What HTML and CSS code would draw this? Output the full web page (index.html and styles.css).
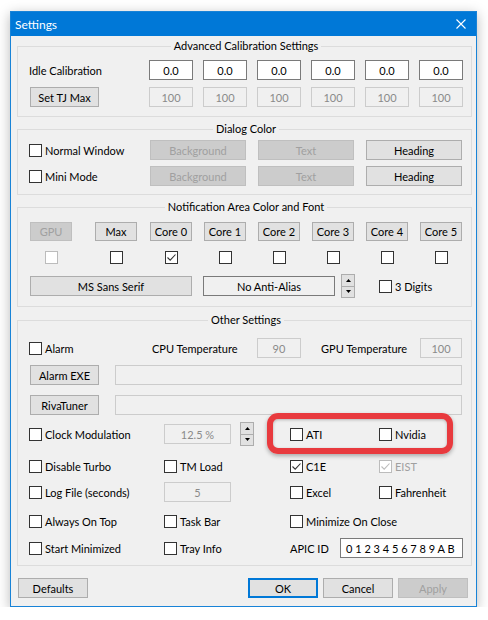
FILE: index.html
```html
<!DOCTYPE html>
<html>
<head>
<meta charset="utf-8">
<title>Settings</title>
<link rel="stylesheet" href="styles.css">
</head>
<body>
<div class="window">
  <div class="titlebar">
    <span class="title">Settings</span>
    <svg class="close" width="10" height="10" viewBox="0 0 10 10"><path d="M0.5 0.5 L9.5 9.5 M9.5 0.5 L0.5 9.5" stroke="#fff" stroke-width="1.1" fill="none"/></svg>
  </div>
  <div class="client">
    <fieldset class="group g1">
      <legend>Advanced Calibration Settings</legend>
      <div class="calib">
        <div class="lbl">Idle Calibration</div>
        <div class="edit">0.0</div>
        <div class="edit">0.0</div>
        <div class="edit">0.0</div>
        <div class="edit">0.0</div>
        <div class="edit">0.0</div>
        <div class="edit">0.0</div>
        <div class="btn tj">Set TJ Max</div>
        <div class="edit dis">100</div>
        <div class="edit dis">100</div>
        <div class="edit dis">100</div>
        <div class="edit dis">100</div>
        <div class="edit dis">100</div>
        <div class="edit dis">100</div>
      </div>
    </fieldset>

    <fieldset class="group g2">
      <legend>Dialog Color</legend>
      <div class="dialog">
        <label class="chk"><span class="box"></span>Normal Window</label>
        <div class="btn dis">Background</div>
        <div class="btn dis">Text</div>
        <div class="btn">Heading</div>
        <label class="chk"><span class="box"></span>Mini Mode</label>
        <div class="btn dis">Background</div>
        <div class="btn dis">Text</div>
        <div class="btn">Heading</div>
      </div>
    </fieldset>

    <fieldset class="group g3">
      <legend>Notification Area Color and Font</legend>
      <div class="notif">
        <div class="btn sm dis first">GPU</div>
        <div class="btn sm">Max</div>
        <div class="btn sm">Core 0</div>
        <div class="btn sm">Core 1</div>
        <div class="btn sm">Core 2</div>
        <div class="btn sm">Core 3</div>
        <div class="btn sm">Core 4</div>
        <div class="btn sm">Core 5</div>
        <div class="cell first"><span class="box disbox"></span></div>
        <div class="cell"><span class="box"></span></div>
        <div class="cell"><span class="box"><svg viewBox="0 0 11 11" width="11" height="11"><path d="M1.5 5.5 L4.2 8.2 L9.5 2.5" stroke="#333" stroke-width="1.1" fill="none"/></svg></span></div>
        <div class="cell"><span class="box"></span></div>
        <div class="cell"><span class="box"></span></div>
        <div class="cell"><span class="box"></span></div>
        <div class="cell"><span class="box"></span></div>
        <div class="cell"><span class="box"></span></div>
      </div>
      <div class="fontrow">
        <div class="btn font">MS Sans Serif</div>
        <div class="static">No Anti-Alias</div>
        <div class="spin">
          <div class="half"><svg width="5" height="3" viewBox="0 0 5 3"><path d="M0 3 L2.5 0 L5 3 Z" fill="#000"/></svg></div>
          <div class="half"><svg width="5" height="3" viewBox="0 0 5 3"><path d="M0 0 L2.5 3 L5 0 Z" fill="#000"/></svg></div>
        </div>
        <label class="chk digits"><span class="box"></span>3 Digits</label>
      </div>
    </fieldset>

    <fieldset class="group g4">
      <legend>Other Settings</legend>
      <div class="row ra">
        <label class="chk w123"><span class="box"></span>Alarm</label>
        <div class="lbl w105">CPU Temperature</div>
        <div class="edit dis w44">90</div>
        <div class="lbl gpu">GPU Temperature</div>
        <div class="edit dis w42">100</div>
      </div>
      <div class="row rb">
        <div class="btn side">Alarm EXE</div>
        <div class="edit dis path"></div>
      </div>
      <div class="row rc">
        <div class="btn side">RivaTuner</div>
        <div class="edit dis path"></div>
      </div>
      <div class="row quad rd">
        <label class="chk"><span class="box"></span>Clock Modulation</label>
        <div class="pair">
          <div class="edit dis w67">12.5 %</div>
          <div class="spin small">
            <div class="half"><svg width="5" height="3" viewBox="0 0 5 3"><path d="M0 3 L2.5 0 L5 3 Z" fill="#000"/></svg></div>
            <div class="half"><svg width="5" height="3" viewBox="0 0 5 3"><path d="M0 0 L2.5 3 L5 0 Z" fill="#000"/></svg></div>
          </div>
        </div>
        <label class="chk"><span class="box"></span>ATI</label>
        <label class="chk"><span class="box"></span>Nvidia</label>
      </div>
      <div class="row quad re">
        <label class="chk"><span class="box"></span>Disable Turbo</label>
        <label class="chk"><span class="box"></span>TM Load</label>
        <label class="chk"><span class="box"><svg viewBox="0 0 11 11" width="11" height="11"><path d="M1.5 5.5 L4.2 8.2 L9.5 2.5" stroke="#333" stroke-width="1.1" fill="none"/></svg></span>C1E</label>
        <label class="chk dischk"><span class="box disbox"><svg viewBox="0 0 11 11" width="11" height="11"><path d="M1.5 5.5 L4.2 8.2 L9.5 2.5" stroke="#bcbcbc" stroke-width="1.1" fill="none"/></svg></span>EIST</label>
      </div>
      <div class="row quad rf">
        <label class="chk"><span class="box"></span>Log File (seconds)</label>
        <div class="edit dis w67">5</div>
        <label class="chk"><span class="box"></span>Excel</label>
        <label class="chk"><span class="box"></span>Fahrenheit</label>
      </div>
      <div class="row quad rg">
        <label class="chk"><span class="box"></span>Always On Top</label>
        <label class="chk"><span class="box"></span>Task Bar</label>
        <label class="chk span2"><span class="box"></span>Minimize On Close</label>
      </div>
      <div class="row quad rh">
        <label class="chk"><span class="box"></span>Start Minimized</label>
        <label class="chk"><span class="box"></span>Tray Info</label>
        <div class="apic span2">
          <div class="lbl w50">APIC ID</div>
          <div class="edit apicbox">0 1 2 3 4 5 6 7 8 9 A B</div>
        </div>
      </div>
    </fieldset>

    <div class="footer">
      <div class="btn fbtn defaults">Defaults</div>
      <div class="btn fbtn ok">OK</div>
      <div class="btn fbtn">Cancel</div>
      <div class="btn fbtn dis">Apply</div>
    </div>
  </div>
  <div class="highlight"></div>
</div>
</body>
</html>
```

FILE: styles.css
```css
* { box-sizing: border-box; }
html, body { margin: 0; padding: 0; background: #ffffff; }
body {
  font-family: Lato, "Liberation Sans", sans-serif;
  font-size: 11px;
  color: #000;
}

.window {
  position: relative;
  margin: 11px 0 0 10px;
  width: 467px;
  height: 596px;
  border: 1px solid #1883d7;
  background: #f0f0f0;
  box-shadow: 0 3px 12px rgba(0, 0, 0, 0.28);
}

.titlebar {
  height: 24px;
  background: #0078d7;
  color: #fff;
  display: flex;
  align-items: center;
  justify-content: space-between;
  padding: 0 10px 0 4px;
}
.title { font-size: 12px; }
.close { display: block; }

.client { padding: 2px 4px 0 6px; }

.group {
  margin: 0;
  border: 1px solid #dcdcdc;
  min-width: 0;
  width: 455px;
}
.group legend {
  margin: 0 auto;
  padding: 0 3px;
  line-height: 16px;
  height: 16px;
}
.g1 { padding: 6px 8px 9px 11px; }
.g2 { margin-top: 4px; padding: 3px 8px 8px 11px; }
.g3 { margin-top: 4px; padding: 7px 8px 8px 11px; }
.g4 { margin-top: 5px; padding: 10px 8px 7px 11px; }

.lbl { display: flex; align-items: center; white-space: nowrap; }

.edit {
  height: 20px;
  background: #fff;
  border: 1px solid #7a7a7a;
  display: flex;
  align-items: center;
  justify-content: center;
  white-space: nowrap;
}
.edit.dis {
  background: #f0f0f0;
  border-color: #cccccc;
  color: #8a8a8a;
}

.btn {
  height: 20px;
  background: #e1e1e1;
  border: 1px solid #adadad;
  display: flex;
  align-items: center;
  justify-content: center;
  white-space: nowrap;
}
.btn.dis {
  background: #cccccc;
  border-color: #bfbfbf;
  color: #a0a0a0;
}

.box {
  width: 13px;
  height: 13px;
  flex: none;
  border: 1px solid #333;
  background: #fff;
  display: inline-flex;
  align-items: center;
  justify-content: center;
}
.box svg { display: block; }
.box.disbox { border-color: #bcbcbc; }

.chk {
  display: flex;
  align-items: center;
  gap: 3px;
  white-space: nowrap;
  height: 20px;
}
.dischk { color: #a0a0a0; }

/* group 1 */
.calib {
  display: grid;
  grid-template-columns: 110px repeat(6, 44px);
  grid-template-rows: 20px 20px;
  column-gap: 10px;
  row-gap: 7px;
}
.tj { width: 69px; margin-left: 1px; }

/* group 2 */
.dialog {
  display: grid;
  grid-template-columns: 109px 96px 96px 96px;
  grid-template-rows: 20px 20px;
  column-gap: 12px;
  row-gap: 6px;
}

/* group 3 */
.notif {
  display: grid;
  grid-template-columns: 66px 55px 54px 54px 54px 54px 54px 42px;
  grid-template-rows: 19px 13px;
  row-gap: 10px;
}
.btn.sm { width: 42px; height: 19px; }
.notif .first { margin-left: 1px; }
.cell { width: 42px; display: flex; justify-content: center; }

.fontrow {
  display: flex;
  align-items: center;
  height: 24px;
  margin-top: 10px;
}
.btn.font { width: 162px; margin-left: 1px; }
.static {
  width: 132px;
  height: 20px;
  margin-left: 11px;
  border: 1px solid #7a7a7a;
  background: #f0f0f0;
  display: flex;
  align-items: center;
  justify-content: center;
}
.spin {
  width: 14px;
  height: 24px;
  margin-left: 6px;
  display: flex;
  flex-direction: column;
  flex: none;
}
.spin .half {
  flex: 1;
  background: #e1e1e1;
  border: 1px solid #adadad;
  display: flex;
  align-items: center;
  justify-content: center;
}
.spin .half + .half { border-top: none; }
.spin .half svg { display: block; }
.digits { margin-left: 24px; }

/* group 4 */
.row { display: flex; align-items: center; height: 20px; }
.quad {
  display: grid;
  grid-template-columns: 135px 126px 89px 84px;
  align-items: center;
}
.span2 { grid-column: span 2; }
.rb { margin-top: 7px; }
.rc { margin-top: 10px; }
.rd { margin-top: 9px; }
.re { margin-top: 12px; }
.rf { margin-top: 6px; }
.rg { margin-top: 9px; }
.rh { margin-top: 7px; }

.w123 { width: 123px; }
.w105 { width: 105px; }
.w44 { width: 44px; }
.w42 { width: 42px; }
.w67 { width: 67px; }
.w50 { width: 50px; }
.gpu { width: 99px; margin-left: 20px; }
.btn.side { width: 69px; margin-left: 1px; }
.edit.path { width: 347px; margin-left: 16px; }
.pair { display: flex; align-items: center; height: 20px; }
.spin.small { margin-left: 9px; }
.apic { display: flex; align-items: center; }
.edit.apicbox {
  width: 123px;
  justify-content: flex-start;
  padding-left: 5px;
}

/* footer */
.footer {
  display: flex;
  margin-top: 12px;
  padding: 0 4px 0 1px;
  gap: 5px;
}
.fbtn { width: 70px; }
.defaults { margin-right: auto; }
.btn.ok { border: 2px solid #0078d7; }

.highlight {
  position: absolute;
  left: 256px;
  top: 401px;
  width: 186px;
  height: 41px;
  border: 6px solid #e83a3e;
  border-radius: 11px;
  box-shadow: 0 2px 4px rgba(0, 0, 0, 0.3), inset 0 1px 3px rgba(0, 0, 0, 0.25);
}
```
